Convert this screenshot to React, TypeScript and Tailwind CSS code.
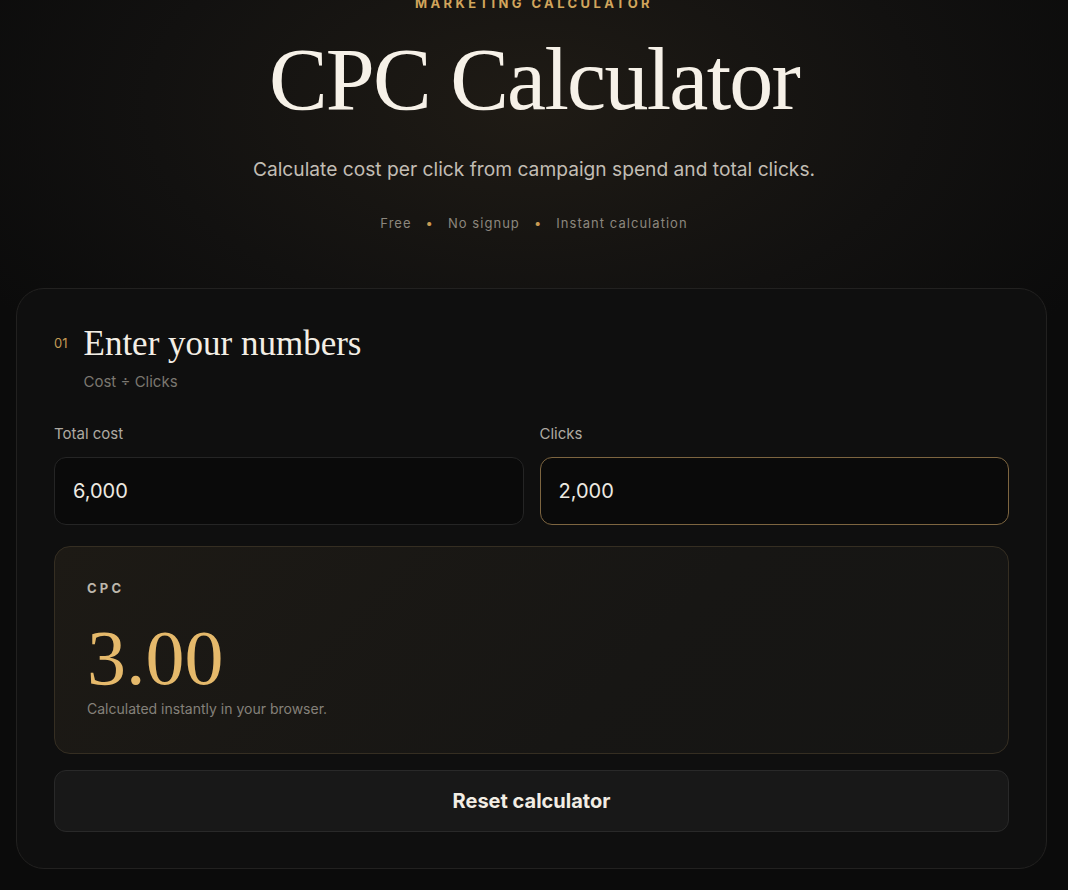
import { useState } from "react";

const serif = "font-['Liberation_Serif','DejaVu_Serif',serif]";
const sans = "font-['Inter','Liberation_Sans',sans-serif]";

export default function App() {
  const [cost, setCost] = useState("6,000");
  const [clicks, setClicks] = useState("2,000");

  const num = (s: string) => Number(s.replace(/,/g, ""));
  const c = num(cost);
  const k = num(clicks);
  const cpc = k > 0 ? (c / k).toFixed(2) : "0.00";

  return (
    <div
      className={`min-h-[890px] w-full bg-[#0b0b0b] bg-[radial-gradient(ellipse_60%_40%_at_50%_12%,#1f1b15_0%,#121110_60%,#0b0b0b_100%)] ${sans}`}
    >
      <header className="flex flex-col items-center text-center">
        <p className="-mt-[5px] text-[13px] font-bold uppercase leading-4 tracking-[0.26em] text-[#d1a55c]">
          Marketing calculator
        </p>
        <h1
          className={`mt-[19px] text-[88px] leading-[100px] tracking-[-0.02em] text-[#f6f1e8] ${serif}`}
        >
          CPC Calculator
        </h1>
        <p className="mt-[25px] text-[19.2px] leading-7 text-[#c2bdb4]">
          Calculate cost per click from campaign spend and total clicks.
        </p>
        <div className="mt-[32px] flex items-center gap-[14px] text-[13px] leading-4 tracking-[0.08em] text-[#8c877e]">
          <span>Free</span>
          <span className="text-[#c99b52]">•</span>
          <span>No signup</span>
          <span className="text-[#c99b52]">•</span>
          <span>Instant calculation</span>
        </div>
      </header>

      <main className="mx-[16px] mt-[57px] mb-[22px] w-[1031px] rounded-[28px] border border-[#222120] bg-[#0f0f0f] px-[37px] pt-[35px] pb-[36px]">
        <div className="flex items-start gap-[16px]">
          <span className="mt-[11px] text-[13px] leading-4 text-[#c39a55]">01</span>
          <div>
            <h2 className={`text-[35px] leading-10 text-[#f3eee5] ${serif}`}>
              Enter your numbers
            </h2>
            <p className="mt-[8px] text-[15px] leading-5 text-[#7b7770]">Cost ÷ Clicks</p>
          </div>
        </div>

        <div className="mt-[32px] grid grid-cols-2 gap-[16px]">
          <label className="flex flex-col">
            <span className="text-[15px] leading-5 text-[#aeaaa2]">Total cost</span>
            <input
              value={cost}
              onChange={(e) => setCost(e.target.value)}
              className="mt-[13px] h-[68px] rounded-[12px] border border-[#252525] bg-[#0a0a0a] px-[18px] text-[20px] text-[#eeeae2] outline-none"
            />
          </label>
          <label className="flex flex-col">
            <span className="text-[15px] leading-5 text-[#aeaaa2]">Clicks</span>
            <input
              value={clicks}
              onChange={(e) => setClicks(e.target.value)}
              className="mt-[13px] h-[68px] rounded-[12px] border border-[#7d6540] bg-[#0a0a0a] px-[18px] text-[20px] text-[#eeeae2] outline-none"
            />
          </label>
        </div>

        <section className="mt-[21px] h-[208px] rounded-[16px] border border-[#352e22] bg-[linear-gradient(135deg,#1d1a15_0%,#171614_60%,#151514_100%)] px-[32px] pt-[33px]">
          <p className="text-[13px] font-bold leading-4 tracking-[0.25em] text-[#bdb7ac]">CPC</p>
          <p className={`mt-[22px] text-[78px] leading-[80px] text-[#e5b96b] ${serif}`}>{cpc}</p>
          <p className="mt-[3px] text-[14px] leading-4 text-[#85817a]">
            Calculated instantly in your browser.
          </p>
        </section>

        <button
          onClick={() => {
            setCost("");
            setClicks("");
          }}
          className="mt-[16px] h-[62px] w-full rounded-[12px] border border-[#292929] bg-[#181818] text-[20px] font-bold text-[#f2ede4]"
        >
          Reset calculator
        </button>
      </main>
    </div>
  );
}
